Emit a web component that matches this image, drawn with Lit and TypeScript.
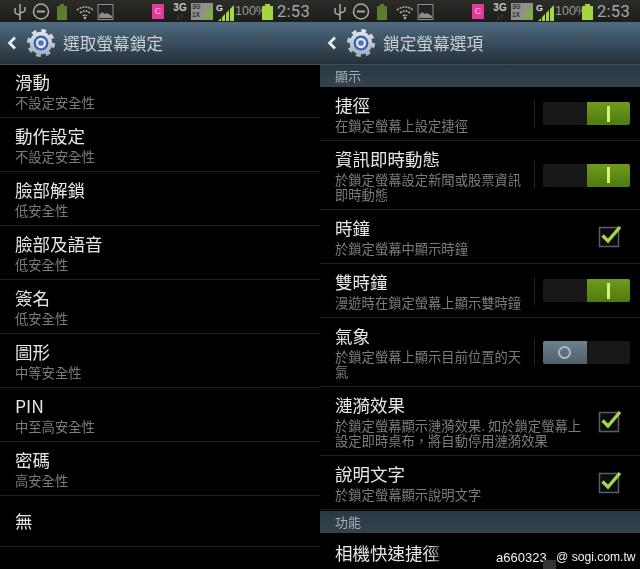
import { LitElement, html, css, svg } from "lit";
import { customElement } from "lit/decorators.js";

const statusBar = () => html`
  <div class="status">
    <svg class="st-left" width="120" height="22" viewBox="0 0 120 22">
      <g fill="none" stroke="#a9a9a5" stroke-width="1.5">
        <path d="M20 4v16M15 8v4q0 2 5 3M25 7v3q0 2-5 3" />
        <circle cx="41" cy="11.500" r="7.500" />
        <path d="M37 11.500h8" stroke-width="2" />
      </g>
      <path d="M60 4h4v2h3v14H57V6h3z" fill="#5d7c30" />
      <g fill="none" stroke="#b5b5b1" stroke-width="1.500" stroke-dasharray="2 1">
        <path d="M77 10q8-6 16 0M80 13q5-4 10 0M83 16q2-2 4 0" />
      </g>
      <circle cx="85" cy="18" r="1.300" fill="#b5b5b1" />
      <rect x="98" y="4.500" width="15" height="15" fill="#222" stroke="#8d8d8a" stroke-width="1" />
      <path d="M99 18v-3l3-3 3 2 2-1 5 3v2z" fill="#8d8d8a" />
    </svg>
    <div class="pink"><span>C</span></div>
    <div class="net"><b>3G</b><i>↓↑</i></div>
    <div class="sim">
      <span class="sim-t">3G<br />1X</span>
      <svg width="15" height="17" viewBox="0 0 15 17"><path d="M0 17L15 0v17z" fill="#83a94a" /></svg>
    </div>
    <b class="g">G</b>
    <svg class="bars" width="16" height="16" viewBox="0 0 16 16">
      <path d="M0 16l3-3v3zM4 16v-4l3-3v7zM8 16V8l3-3v11zM12 16V4l4-4v16z" fill="#a5d740" />
    </svg>
    <span class="pct">100%</span>
    <svg class="batt" width="11" height="16" viewBox="0 0 11 16"><path d="M3 0h5v2h3v14H0V2h3z" fill="#a5d63f" /></svg>
    <span class="time">2:53</span>
  </div>
`;

const gear = () => svg`
  <svg class="gear" width="28" height="28" viewBox="0 0 30 30">
    <defs>
      <linearGradient id="gg" x1="0" y1="0" x2="0" y2="1">
        <stop offset="0" stop-color="#dbe3eb" />
        <stop offset="1" stop-color="#a3b1be" />
      </linearGradient>
    </defs>
    <circle cx="15" cy="15" r="12" fill="url(#gg)" />
    <circle cx="15" cy="15" r="13" fill="none" stroke="url(#gg)" stroke-width="4" stroke-dasharray="5 5.210" />
    <circle cx="15" cy="15" r="8" fill="#3a62ad" />
    <circle cx="15" cy="15" r="5.500" fill="#dfe5ec" />
    <circle cx="15" cy="15" r="3" fill="#4f76b4" />
  </svg>
`;

const header = (title: string) => html`
  <div class="bar">
    <svg class="back" width="10" height="14" viewBox="0 0 10 14">
      <path d="M8 1.500L2.500 7 8 12.500" fill="none" stroke="#eef1f3" stroke-width="2.600" />
    </svg>
    ${gear()}
    <span class="bar-t">${title}</span>
  </div>
`;

const sw = (on: boolean) => html`
  <div class="ctl">
    <i class="div"></i>
    <div class="sw">
      ${on
        ? html`<span class="off"></span><span class="on"><i></i></span>`
        : html`<span class="gray"><i></i></span><span class="off"></span>`}
    </div>
  </div>
`;

const check = () => html`
  <div class="chk">
    <svg width="25" height="25" viewBox="0 0 25 25">
      <rect x="1.500" y="3.500" width="19" height="19" fill="#0b0b10" stroke="#5a5c66" stroke-width="1.500" />
      <path d="M4.500 11.500l5.500 5.500L22 3" fill="none" stroke="#a3d64a" stroke-width="3.400" />
    </svg>
  </div>
`;

const leftRows: [string, string][] = [
  ["滑動", "不設定安全性"],
  ["動作設定", "不設定安全性"],
  ["臉部解鎖", "低安全性"],
  ["臉部及語音", "低安全性"],
  ["簽名", "低安全性"],
  ["圖形", "中等安全性"],
  ["PIN", "中至高安全性"],
  ["密碼", "高安全性"],
];

type Ctl = "on" | "off" | "check";
const rightRows: [string, string, Ctl][] = [
  ["捷徑", "在鎖定螢幕上設定捷徑", "on"],
  ["資訊即時動態", "於鎖定螢幕設定新聞或股票資訊即時動態", "on"],
  ["時鐘", "於鎖定螢幕中顯示時鐘", "check"],
  ["雙時鐘", "漫遊時在鎖定螢幕上顯示雙時鐘", "on"],
  ["氣象", "於鎖定螢幕上顯示目前位置的天氣", "off"],
  ["漣漪效果", "於鎖定螢幕顯示漣漪效果. 如於鎖定螢幕上設定即時桌布，將自動停用漣漪效果", "check"],
  ["說明文字", "於鎖定螢幕顯示說明文字", "check"],
];

@customElement("app-root")
export class AppRoot extends LitElement {
  static styles = css`
    :host {
      display: block;
      position: relative;
      width: 640px;
      height: 569px;
      overflow: hidden;
      background: #000;
      font-family: "Noto Sans CJK TC", "Noto Sans", sans-serif;
    }
    .screen { display: flex; height: 569px; filter: blur(0.35px); }
    .panel { width: 320px; flex: none; overflow: hidden; }
    .status {
      height: 22px;
      display: flex;
      align-items: center;
      background: linear-gradient(#2b2b28, #1d1d1b);
      color: #a9a9a5;
    }
    .st-left { flex: none; margin-right: 32px; }
    .pink {
      width: 12px; height: 15px; margin-right: 9px; flex: none;
      background: #e6399b; display: flex; align-items: center; justify-content: center;
      font: 9px "Liberation Sans", sans-serif; color: #f7c5e2;
    }
    .net {
      width: 14px; margin-right: 4px; margin-top: 2px; text-align: center; flex: none;
      font-family: "Liberation Sans", sans-serif; line-height: 9px;
    }
    .net b { display: block; font-size: 10px; color: #c8c8c4; }
    .net i { display: block; font-size: 7px; font-style: normal; color: #777; }
    .sim {
      width: 22px; height: 17px; margin-right: 3px; flex: none;
      background: #8f8f8b; display: flex; justify-content: space-between; overflow: hidden;
    }
    .sim-t { font: bold 6.500px/8px "Liberation Sans", sans-serif; color: #333; padding-left: 1px; }
    .g { font: bold 9px "Liberation Sans", sans-serif; color: #ddd; width: 8px; align-self: flex-start; margin-top: 3px; flex: none; }
    .bars { flex: none; margin-left: -6px; margin-top: 3px; }
    .pct { font: 12.500px "Liberation Sans", sans-serif; color: #9a9a96; margin-left: 1px; width: 27px; flex: none; }
    .batt { flex: none; margin-top: 1px; }
    .time { font: 16.500px "Roboto", sans-serif; color: #a6a6a2; margin-left: 4px; letter-spacing: 0.300px; flex: none; }

    .bar {
      height: 43px;
      display: flex;
      align-items: center;
      background: linear-gradient(#4e6b81, #243039);
      border-bottom: 1px solid #3e4e58;
      box-sizing: border-box;
    }
    .back { margin-left: 7px; flex: none; }
    .gear { margin-left: 10px; margin-right: 8px; flex: none; }
    .bar-t { font-size: 16.700px; color: #c9d0d5; line-height: 24px; }

    .row { border-bottom: 1px solid #1f1f1f; box-sizing: border-box; }
    .t { font-size: 17.500px; line-height: 24px; color: #e6e6e6; }
    .s { font-size: 13.300px; color: #7c7c7c; }

    .left { margin-top: -1px; }
    .left .row { padding: 6px 15px 5px; height: 54px; }
    .left .s { line-height: 16px; margin-top: 1px; }
    .left .none { height: 51px; padding-top: 13px; }

    .sec {
      height: 22px;
      padding-left: 15px;
      background: linear-gradient(#2a3844, #33444f);
      font-size: 13px;
      line-height: 21px;
      color: #a4adb3;
      box-sizing: border-box;
    }
    .sec.b { margin-top: 1px; line-height: 22px; }
    .right .row {
      display: flex;
      align-items: center;
      padding: 0 10px 0 15px;
    }
    .txt { flex: 1; min-width: 0; padding: 6px 0 7px; }
    .txt .s { line-height: 15px; margin-top: 1px; }
    .ctl { display: flex; align-items: center; flex: none; width: 96px; margin-left: 8px; justify-content: space-between; }
    .div { width: 1px; height: 28px; background: #222; }
    .sw { width: 87px; height: 23px; display: flex; background: #181818; border-radius: 2px; overflow: hidden; }
    .sw span { flex: 1; display: flex; align-items: center; justify-content: center; }
    .on { background: linear-gradient(#6f9b1c, #4e7a10); }
    .on i { width: 3px; height: 16px; background: #d8f26e; }
    .gray { background: linear-gradient(#6d808d, #4f606c); }
    .gray i { width: 9px; height: 9px; border: 2px solid #adb9c1; border-radius: 50%; }
    .chk { flex: none; width: 25px; margin: 0 7px 0 13px; display: flex; }

    .right .row.cut { border: 0; align-items: flex-start; padding-top: 2px; }

    .wm {
      position: absolute;
      left: 430px;
      right: 0;
      bottom: 0;
      height: 24px;
      display: flex;
      align-items: center;
      background: linear-gradient(90deg, transparent, #000 16px);
      color: #f2f2f2;
      font: 13px "Liberation Sans", sans-serif;
      white-space: nowrap;
    }
    .wm-a { margin-left: 66px; width: 47px; flex: none; }
    .wm-g { width: 13px; height: 9px; background: #333; align-self: flex-end; flex: none; }
    .wm-b { font-size: 12.100px; flex: none; }
  `;

  render() {
    return html`
      <div class="screen">
        <section class="panel">
          ${statusBar()} ${header("選取螢幕鎖定")}
          <div class="left">
            ${leftRows.map(
              ([t, s]) => html`<div class="row"><div class="t">${t}</div><div class="s">${s}</div></div>`
            )}
            <div class="row none"><div class="t">無</div></div>
          </div>
        </section>
        <section class="panel">
          ${statusBar()} ${header("鎖定螢幕選項")}
          <div class="right">
            <div class="sec">顯示</div>
            ${rightRows.map(
              ([t, s, c]) => html`<div class="row">
                <div class="txt"><div class="t">${t}</div><div class="s">${s}</div></div>
                ${c === "check" ? check() : sw(c === "on")}
              </div>`
            )}
            <div class="sec b">功能</div>
            <div class="row cut">
              <div class="txt"><div class="t">相機快速捷徑</div></div>
            </div>
          </div>
        </section>
      </div>
      <div class="wm"><span class="wm-a">a660323</span><i class="wm-g"></i><span class="wm-b">@ sogi.com.tw</span></div>
    `;
  }
}
